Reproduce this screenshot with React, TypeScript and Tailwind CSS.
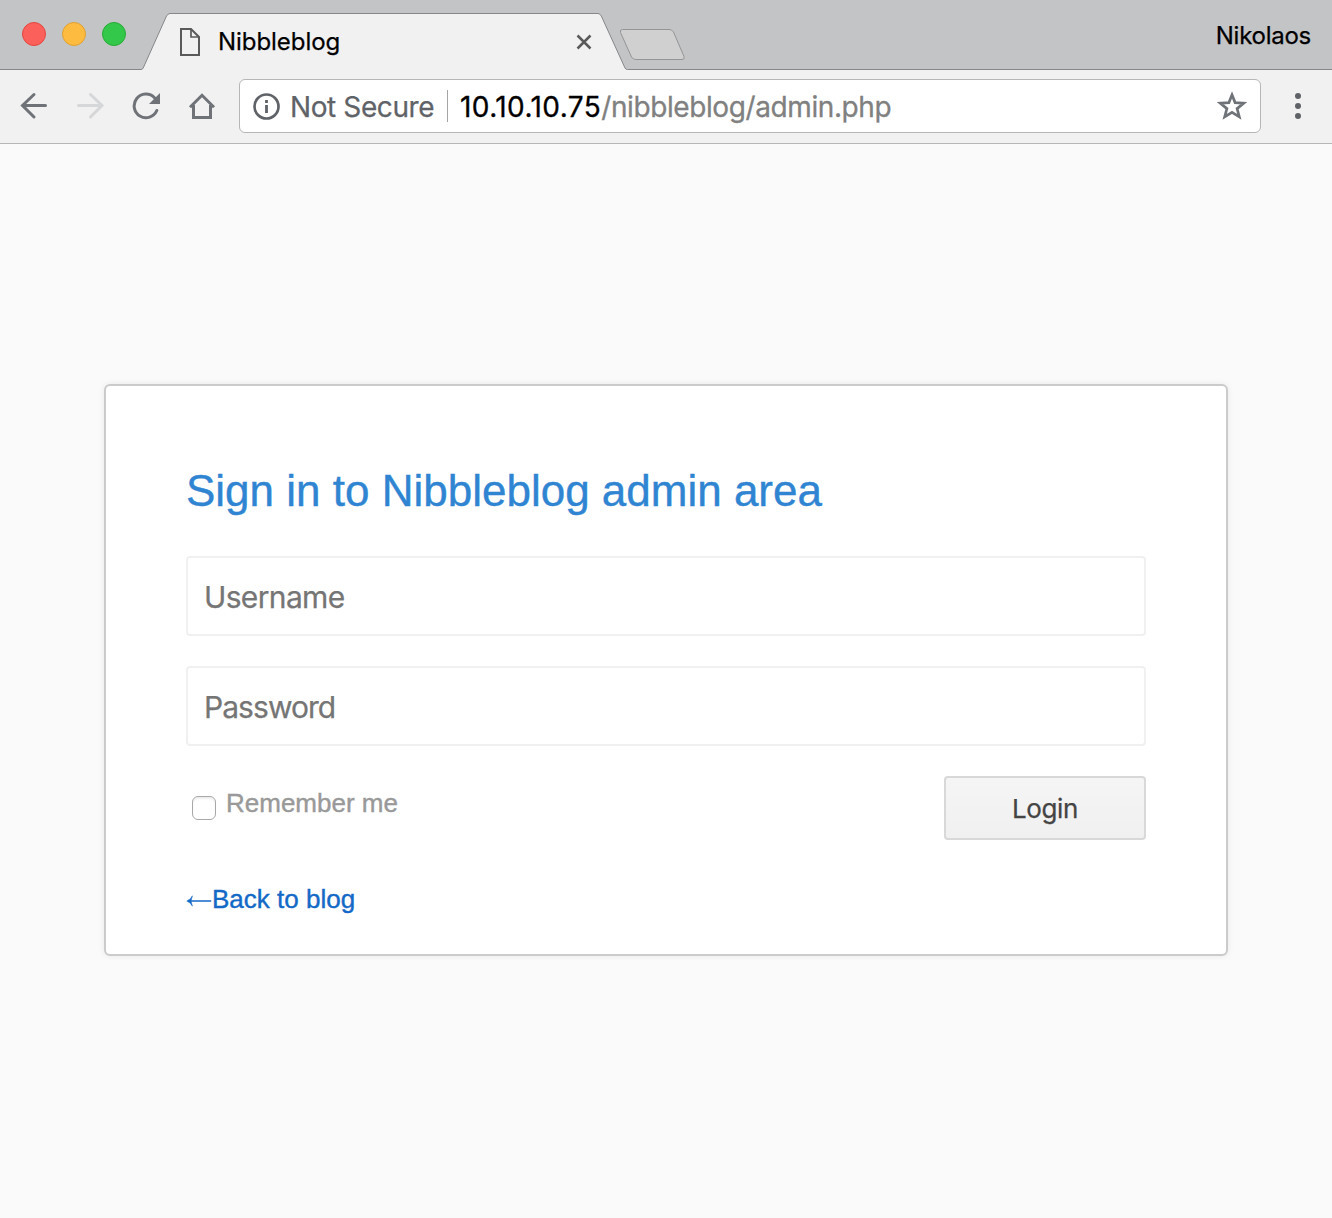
import React from "react";

function TabStrip() {
  return (
    <header className="relative flex h-[70px] items-start bg-[#c3c4c6]">
      <svg className="absolute inset-0" width="1332" height="70" viewBox="0 0 1332 70" fill="none">
        <path d="M0 69.5H141Q142.500 69.500 143.200 68L166.500 16Q168 13.500 170 13.500H598Q600 13.500 601.300 16L625 68Q625.700 69.500 627.500 69.500H1332V70H0Z" fill="#f1f1f1" />
        <path d="M0 69.500H141Q142.500 69.500 143.200 68L166.500 16Q168 13.500 170 13.500H598Q600 13.500 601.300 16L625 68Q625.700 69.500 627.500 69.500H1332" stroke="#85878a" />
        <path d="M622.500 29.500H669Q672 29.500 673.500 32L684 56.500Q685 59.500 682 59.500H636Q633 59.500 631.500 57L620.500 32.500Q619.500 29.500 622.500 29.500Z" fill="#d0d0d0" stroke="#949597" />
      </svg>
      <div className="relative flex gap-4 pl-[22px] pt-[22px]">
        <span className="size-6 rounded-full border border-[#e2463f] bg-[#fc605b]" />
        <span className="size-6 rounded-full border border-[#dfa035] bg-[#fdbc40]" />
        <span className="size-6 rounded-full border border-[#27aa35] bg-[#34c84a]" />
      </div>
      <svg className="relative ml-[53px] mt-[27px]" width="22" height="30" viewBox="0 0 22 30" fill="none" stroke="#5a5a5a" strokeWidth="2">
        <path d="M2 2H12L20 10V28H2Z" />
        <path d="M12 2V10H20" strokeWidth="1.700" />
      </svg>
      <span className="relative ml-[17px] mt-[26px] w-[340px] whitespace-nowrap text-[24px] leading-[32px] tracking-[-0.05px] text-black [-webkit-text-stroke:0.25px]">Nibbleblog</span>
      <svg className="relative ml-[18px] mt-[34px]" width="16" height="16" viewBox="0 0 16 16" stroke="#5a5a5a" strokeWidth="2.500">
        <path d="M1.500 1.500L14.500 14.500M14.500 1.500L1.500 14.500" />
      </svg>
      <span className="relative ml-auto mr-[21px] mt-[20px] text-[24px] leading-[32px] tracking-[-0.25px] text-black [-webkit-text-stroke:0.25px]">Nikolaos</span>
    </header>
  );
}

function Toolbar() {
  return (
    <nav className="flex h-[74px] items-start border-b border-[#b6b6b6] bg-[#f1f1f1]">
      <svg className="mt-[22px] shrink-0" width="239" height="28" viewBox="0 92 239 28" fill="none" stroke="#6f7378" strokeWidth="3">
        <path d="M45.500 105.500H23M34 94.500L22.500 105.500L34 117" strokeLinecap="round" />
        <path d="M78.500 105.500H101M90.500 94.500L102 105.500L90.500 117" stroke="#d6d7d9" strokeLinecap="round" />
        <path d="M156.800 110.500A11.800 11.800 0 1 1 154.500 97.700" strokeLinecap="round" />
        <path d="M160 93V104H149Z" fill="#6f7378" stroke="none" />
        <path d="M193.500 105V117.500H210.500V105M190 107.200L202 95.300L214 107.200" />
      </svg>
      <div className="mt-[9px] flex h-[54px] w-[1022px] shrink-0 items-center rounded-[6px] border border-[#b6b6b6] bg-white text-[28px]">
        <svg className="ml-[13px] shrink-0" width="27" height="27" viewBox="0 0 27 27" fill="none" stroke="#5f6368">
          <circle cx="13.500" cy="13.500" r="12" strokeWidth="2.700" />
          <path d="M13.500 12V20M13.500 7V10" strokeWidth="2.800" />
        </svg>
        <span className="ml-[10px] w-[157px] shrink-0 whitespace-nowrap pt-[2px] tracking-[-0.4px] text-[#5f6368] [-webkit-text-stroke:0.25px]">Not Secure</span>
        <span className="h-8 w-px bg-[#a5a5a5]" />
        <span className="ml-[12px] whitespace-nowrap pt-[2px] tracking-[0.42px] text-black [-webkit-text-stroke:0.3px]">10.10.10.75<span className="tracking-[-0.4px] text-[#808080]">/nibbleblog/admin.php</span></span>
        <svg className="ml-auto mr-[13px] shrink-0" width="30" height="30" viewBox="0 0 30 30" fill="none" stroke="#6f7378" strokeWidth="2.700">
          <path d="M15 3.800L18.100 11.600L26.600 12.200L20.100 17.600L22.300 25.900L15 21.400L7.700 25.900L9.900 17.600L3.400 12.200L11.900 11.600Z" />
        </svg>
      </div>
      <div className="ml-[34px] mt-[23px] flex flex-col gap-1">
        <span className="size-1.5 rounded-full bg-[#5f6368]" />
        <span className="size-1.5 rounded-full bg-[#5f6368]" />
        <span className="size-1.5 rounded-full bg-[#5f6368]" />
      </div>
    </nav>
  );
}

function Field({ label, type, tracking }: { label: string; type: string; tracking: string }) {
  return (
    <input
      type={type}
      placeholder={label}
      className={`mb-[30px] block h-20 w-[960px] rounded-[4px] border-2 border-[#f0f0f0] bg-white px-4 pt-px text-[30px] [-webkit-text-stroke:0.25px] placeholder:text-[#757575] ${tracking}`}
    />
  );
}

export default function App() {
  return (
    <div className="flex h-[1218px] w-[1332px] flex-col bg-[#fafafa] font-['Inter',sans-serif]">
      <TabStrip />
      <Toolbar />
      <main className="mx-auto mt-[240px] h-[572px] w-[1124px] rounded-[6px] border-2 border-[#cbcbcb] bg-white px-20 pt-[79px] shadow-[0_0_6px_rgba(0,0,0,0.08)]">
        <h1 className="mb-[39px] h-[52px] whitespace-nowrap font-['Liberation_Sans',sans-serif] text-[44px] leading-[52px] text-[#3085d2] [-webkit-text-stroke:0.4px]">Sign in to Nibbleblog admin area</h1>
        <Field label="Username" type="text" tracking="tracking-[-0.65px]" />
        <Field label="Password" type="password" tracking="tracking-[-0.95px]" />
        <div className="flex items-start">
          <input type="checkbox" className="ml-[6px] mt-[20px] size-6 appearance-none rounded-[6px] border border-[#a8a8a8] bg-white shadow-[inset_0_2px_2px_rgba(0,0,0,0.07)]" />
          <label className="ml-[10px] mt-[12px] font-['Liberation_Sans',sans-serif] text-[26px] leading-[30px] text-[#999999] [-webkit-text-stroke:0.4px]">Remember me</label>
          <button className="ml-auto h-16 w-[202px] rounded-[4px] border-2 border-[#d8d8d8] bg-linear-to-b from-[#f5f5f5] to-[#f0f0f0] pt-px text-[26px] tracking-[-0.35px] text-[#444444] [-webkit-text-stroke:0.25px]">Login</button>
        </div>
        <a className="mt-[44px] flex h-[30px] w-fit items-start font-['Liberation_Sans',sans-serif] text-[26px] leading-[30px] text-[#1469c7] [-webkit-text-stroke:0.4px]">
          <svg className="mt-[11px] shrink-0" width="26" height="12" viewBox="0 0 26 12" fill="none" stroke="currentColor">
            <path d="M2.500 6H25.200" strokeWidth="1.500" />
            <path d="M0.800 6Q5 4.200 6.400 0.800L5 6L6.400 11.200Q5 7.800 0.800 6Z" fill="currentColor" strokeWidth="0.500" />
          </svg>
          Back to blog
        </a>
      </main>
    </div>
  );
}
